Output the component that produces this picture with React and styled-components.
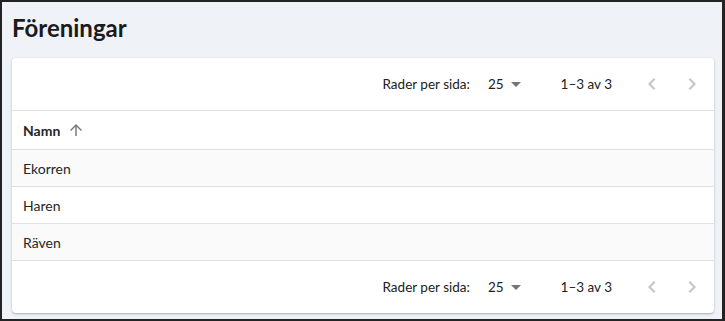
import React from 'react';
import styled, { createGlobalStyle } from 'styled-components';

const rows = ['Ekorren', 'Haren', 'Räven'];

const GlobalStyle = createGlobalStyle`
  html, body {
    margin: 0;
    padding: 0;
    background: #232323;
  }
  body {
    font-family: Lato, "Open Sans", sans-serif;
    -webkit-font-smoothing: antialiased;
  }
`;

const ArrowDropDown = () => (
  <svg width="24" height="24" viewBox="0 0 24 24" fill="currentColor">
    <path d="M7 10l5 5 5-5z" />
  </svg>
);

const NavBefore = () => (
  <svg width="24" height="24" viewBox="0 0 24 24" fill="currentColor">
    <path d="M15.41 7.41 14 6l-6 6 6 6 1.41-1.41L10.83 12z" />
  </svg>
);

const NavNext = () => (
  <svg width="24" height="24" viewBox="0 0 24 24" fill="currentColor">
    <path d="M10 6 8.59 7.41 13.17 12l-4.58 4.59L10 18l6-6z" />
  </svg>
);

const ArrowUp = () => (
  <svg width="18" height="18" viewBox="0 0 24 24" fill="currentColor">
    <path d="M4 12l1.41 1.41L11 7.83V20h2V7.83l5.58 5.59L20 12l-8-8-8 8z" />
  </svg>
);

const Pagination = ({ bordered }) => (
  <Pager bordered={bordered}>
    <PagerLabel>Rader per sida:</PagerLabel>
    <Select>
      <span>25</span>
      <Caret>
        <ArrowDropDown />
      </Caret>
    </Select>
    <PagerLabel>1–3 av 3</PagerLabel>
    <Actions>
      <IconButton disabled>
        <NavBefore />
      </IconButton>
      <IconButton disabled>
        <NavNext />
      </IconButton>
    </Actions>
  </Pager>
);

const App = () => {
  return (
    <>
      <GlobalStyle />
      <Page>
        <Title>Föreningar</Title>
        <Card>
          <Pagination bordered />
          <Table>
            <thead>
              <tr>
                <HeadCell>
                  <SortLabel>
                    Namn
                    <SortIcon>
                      <ArrowUp />
                    </SortIcon>
                  </SortLabel>
                </HeadCell>
              </tr>
            </thead>
            <tbody>
              {rows.map((name, index) => (
                <Row key={name} striped={index % 2 === 0}>
                  <Cell>{name}</Cell>
                </Row>
              ))}
            </tbody>
          </Table>
          <Pagination />
        </Card>
      </Page>
    </>
  );
};

const Page = styled.div`
  margin: 2px 3px 2px 2px;
  height: 317px;
  box-sizing: border-box;
  background: #eff2f7;
  padding: 9px 8px 5px 10px;
  display: flex;
  flex-direction: column;
`;

const Title = styled.h1`
  margin: 0 0 13px;
  font-size: 24px;
  line-height: 34px;
  font-weight: 700;
  color: #1b1b1b;
`;

const Card = styled.div`
  background: #fff;
  border-radius: 4px;
  box-shadow: 0 1px 3px rgba(0, 0, 0, 0.2), 0 1px 1px rgba(0, 0, 0, 0.12);
  overflow: hidden;
`;

const Pager = styled.div`
  height: 52px;
  display: flex;
  align-items: center;
  justify-content: flex-end;
  padding-right: 2px;
  border-bottom: ${({ bordered }) => (bordered ? '1px solid #e0e0e0' : 'none')};
  font-size: 13.5px;
  color: #212121;
`;

const PagerLabel = styled.span`
  line-height: 20px;
`;

const Select = styled.div`
  display: flex;
  align-items: center;
  margin: 0 33px 0 18px;
`;

const Caret = styled.span`
  display: flex;
  color: #757575;
`;

const Actions = styled.div`
  display: flex;
  margin-left: 20px;
`;

const IconButton = styled.button`
  width: 40px;
  height: 40px;
  border: 0;
  padding: 0;
  background: transparent;
  display: flex;
  align-items: center;
  justify-content: center;
  color: ${({ disabled }) => (disabled ? '#c4c4c4' : '#616161')};
`;

const Table = styled.table`
  width: 100%;
  border-collapse: collapse;
  font-size: 14px;
  color: #262626;
`;

const HeadCell = styled.th`
  text-align: left;
  height: 38px;
  padding: 0 10px 0 11px;
  border-bottom: 1px solid #e0e0e0;
  font-weight: 700;
`;

const SortLabel = styled.span`
  display: inline-flex;
  align-items: center;
  gap: 7px;
`;

const SortIcon = styled.span`
  display: flex;
  color: #7a7a7a;
`;

const Row = styled.tr`
  background: ${({ striped }) => (striped ? '#fafafa' : '#fff')};
`;

const Cell = styled.td`
  height: 36px;
  padding: 0 10px 0 11px;
  border-bottom: 1px solid #e0e0e0;
`;

export default App;
